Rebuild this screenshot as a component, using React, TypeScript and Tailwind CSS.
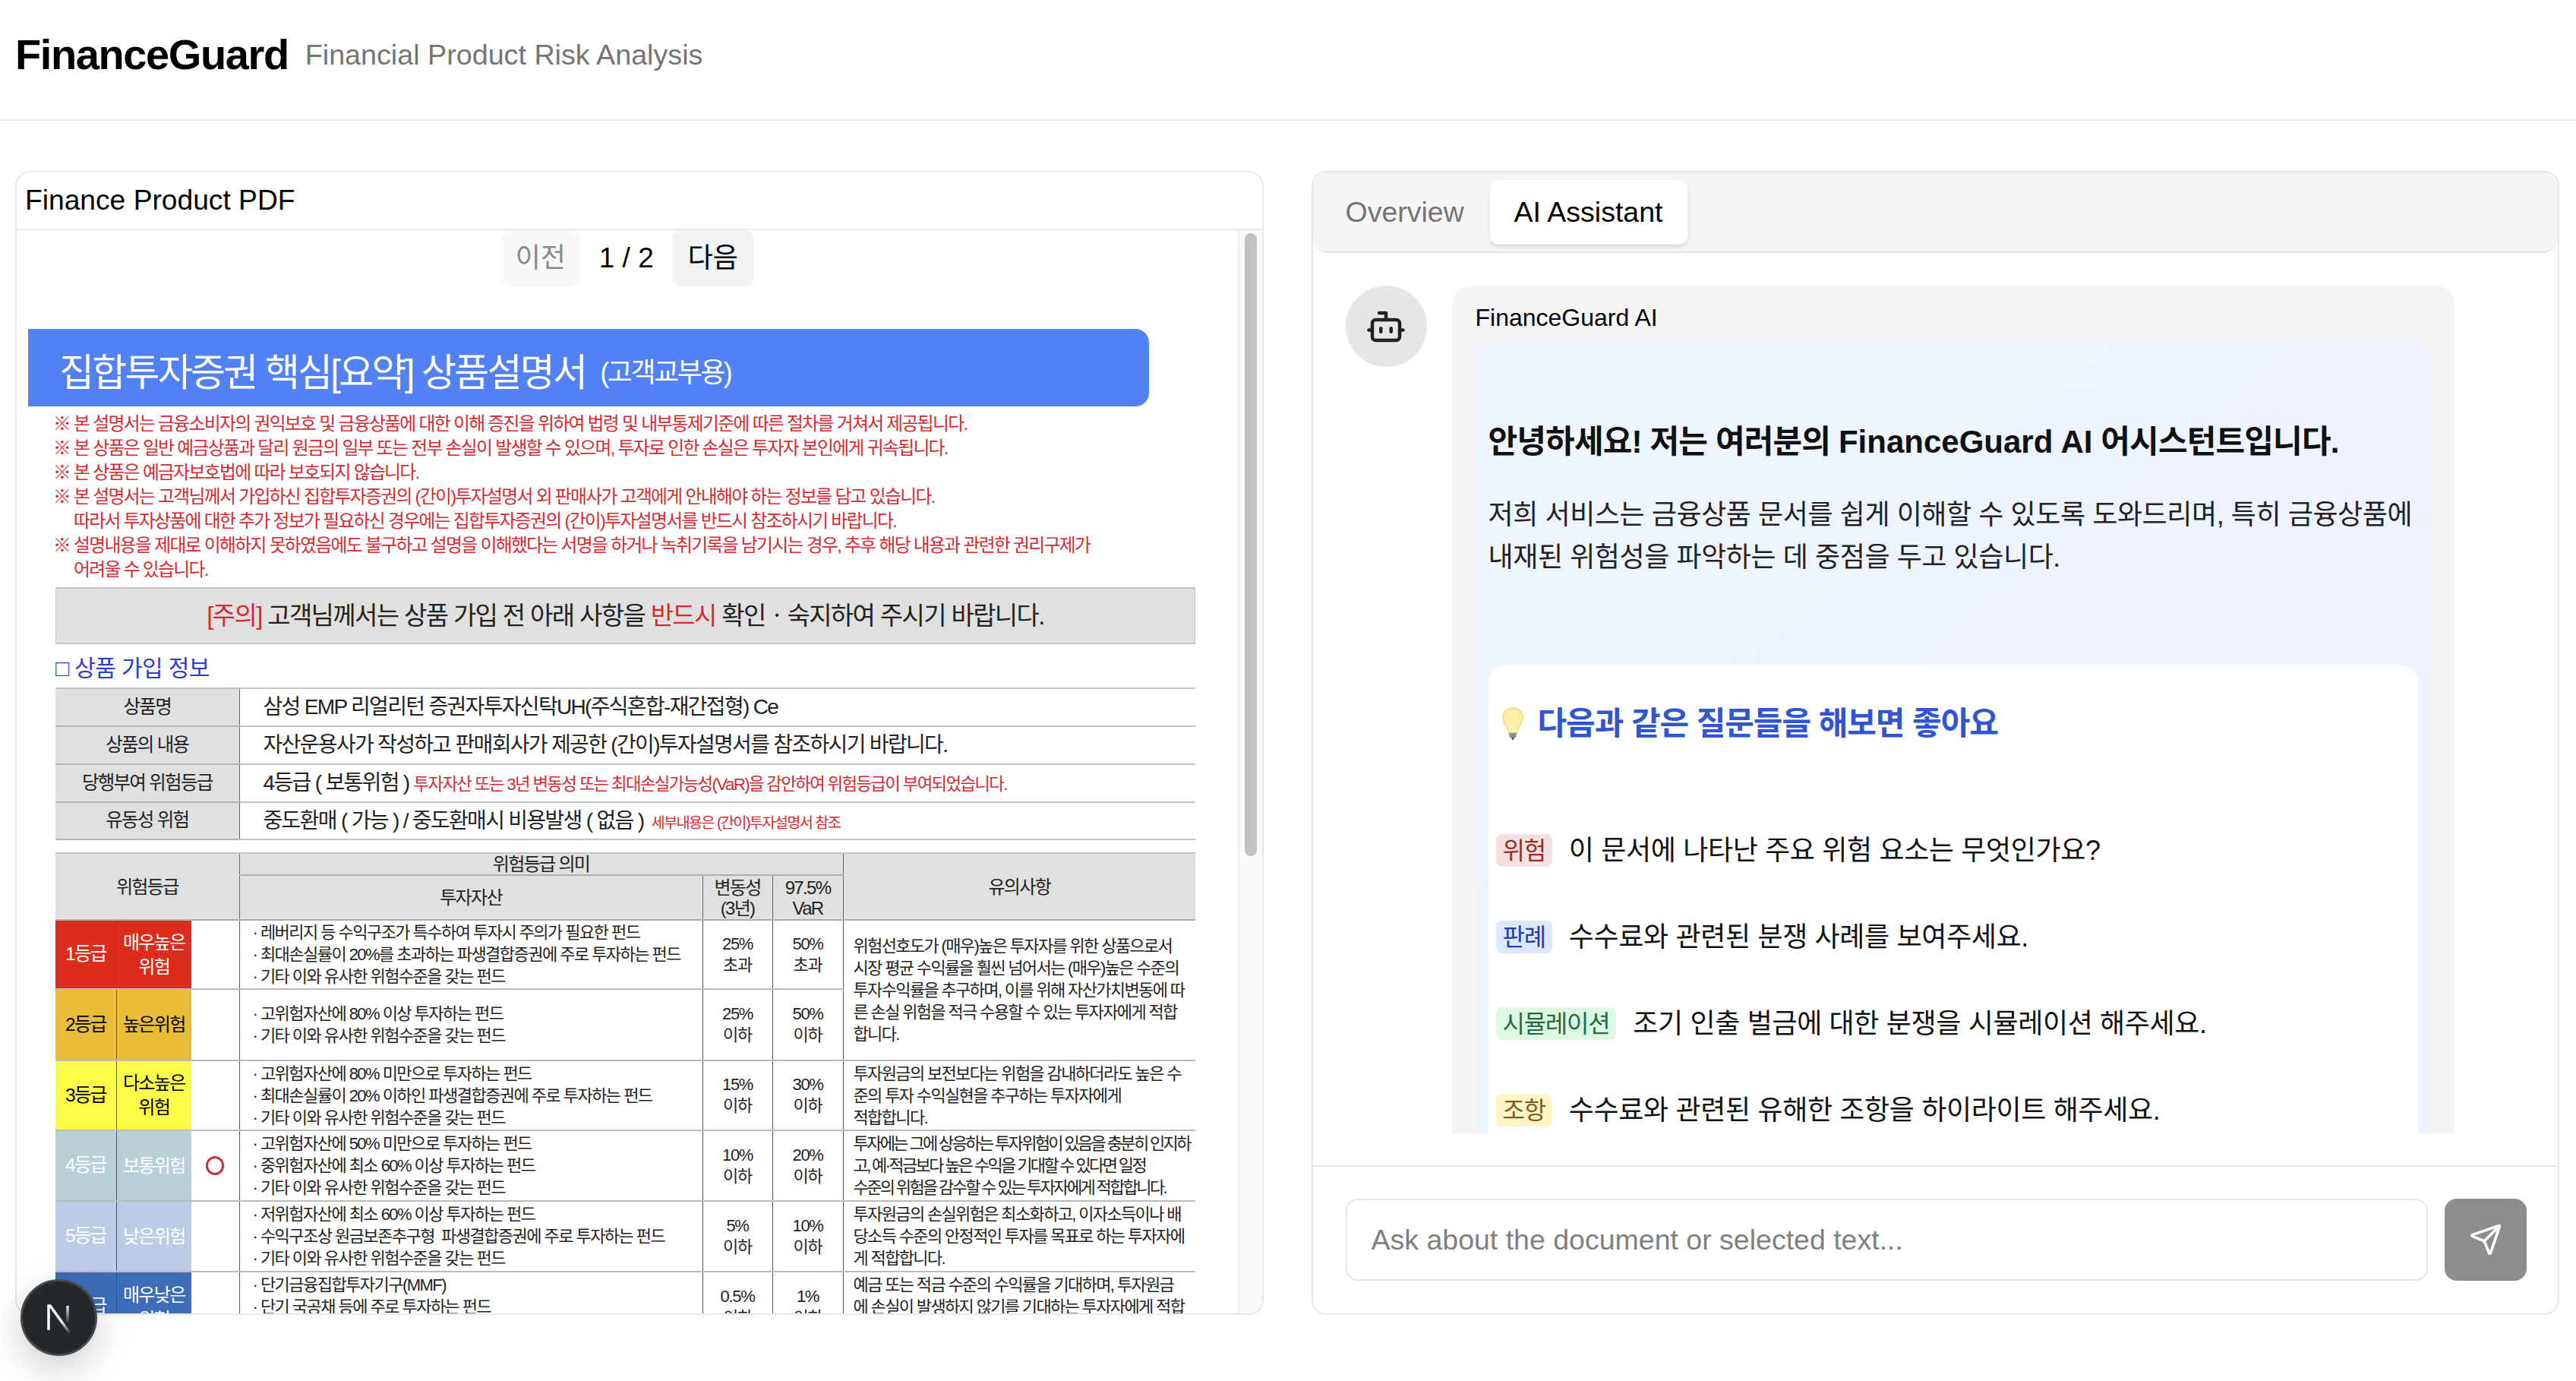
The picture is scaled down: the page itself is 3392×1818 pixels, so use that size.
import { Bot, Send } from 'lucide-react';

// 요약 설명서 상단 안내 문구
const NOTES = [
  { mark: true, text: '본 설명서는 금융소비자의 권익보호 및 금융상품에 대한 이해 증진을 위하여 법령 및 내부통제기준에 따른 절차를 거쳐서 제공됩니다.' },
  { mark: true, text: '본 상품은 일반 예금상품과 달리 원금의 일부 또는 전부 손실이 발생할 수 있으며, 투자로 인한 손실은 투자자 본인에게 귀속됩니다.' },
  { mark: true, text: '본 상품은 예금자보호법에 따라 보호되지 않습니다.' },
  { mark: true, text: '본 설명서는 고객님께서 가입하신 집합투자증권의 (간이)투자설명서 외 판매사가 고객에게 안내해야 하는 정보를 담고 있습니다.' },
  { mark: false, text: '따라서 투자상품에 대한 추가 정보가 필요하신 경우에는 집합투자증권의 (간이)투자설명서를 반드시 참조하시기 바랍니다.' },
  { mark: true, text: '설명내용을 제대로 이해하지 못하였음에도 불구하고 설명을 이해했다는 서명을 하거나 녹취기록을 남기시는 경우, 추후 해당 내용과 관련한 권리구제가' },
  { mark: false, text: '어려울 수 있습니다.' },
];

const ETC = '기타 이와 유사한 위험수준을 갖는 펀드';

const RISK_ROWS = [
  {
    grade: '1등급', name: ['매우높은', '위험'], gradeClass: 'bg-[#dc2d1c] text-white', height: 'h-[91px]',
    funds: ['레버리지 등 수익구조가 특수하여 투자시 주의가 필요한 펀드', '최대손실률이 20%를 초과하는 파생결합증권에 주로 투자하는 펀드', ETC],
    vol: ['25%', '초과'], cvar: ['50%', '초과'],
    note: ['위험선호도가 (매우)높은 투자자를 위한 상품으로서', '시장 평균 수익률을 훨씬 넘어서는 (매우)높은 수준의', '투자수익률을 추구하며, 이를 위해 자산가치변동에 따', '른 손실 위험을 적극 수용할 수 있는 투자자에게 적합', '합니다.'],
    noteClass: 'tracking-[-0.075em]', span: 2,
  },
  {
    grade: '2등급', name: ['높은위험'], gradeClass: 'bg-[#e9bc3a] text-black', height: 'h-[94px]',
    funds: ['고위험자산에 80% 이상 투자하는 펀드', ETC],
    vol: ['25%', '이하'], cvar: ['50%', '이하'], note: null, noteClass: '', span: 0,
  },
  {
    grade: '3등급', name: ['다소높은', '위험'], gradeClass: 'bg-[#fbfb48] text-black', height: 'h-[92px]',
    funds: ['고위험자산에 80% 미만으로 투자하는 펀드', '최대손실률이 20% 이하인 파생결합증권에 주로 투자하는 펀드', ETC],
    vol: ['15%', '이하'], cvar: ['30%', '이하'],
    note: ['투자원금의 보전보다는 위험을 감내하더라도 높은 수', '준의 투자 수익실현을 추구하는 투자자에게', '적합합니다.'],
    noteClass: 'tracking-[-0.075em]', span: 1,
  },
  {
    grade: '4등급', name: ['보통위험'], gradeClass: 'bg-[#b8d0d6] text-white', height: 'h-[93px]', current: true,
    funds: ['고위험자산에 50% 미만으로 투자하는 펀드', '중위험자산에 최소 60% 이상 투자하는 펀드', ETC],
    vol: ['10%', '이하'], cvar: ['20%', '이하'],
    note: ['투자에는 그에 상응하는 투자위험이 있음을 충분히 인지하', '고, 예·적금보다 높은 수익을 기대할 수 있다면 일정', '수준의 위험을 감수할 수 있는 투자자에게 적합합니다.'],
    noteClass: 'tracking-[-0.12em]', span: 1,
  },
  {
    grade: '5등급', name: ['낮은위험'], gradeClass: 'bg-[#bccbe6] text-white', height: 'h-[93px]',
    funds: ['저위험자산에 최소 60% 이상 투자하는 펀드', '수익구조상 원금보존추구형  파생결합증권에 주로 투자하는 펀드', ETC],
    vol: ['5%', '이하'], cvar: ['10%', '이하'],
    note: ['투자원금의 손실위험은 최소화하고, 이자소득이나 배', '당소득 수준의 안정적인 투자를 목표로 하는 투자자에', '게 적합합니다.'],
    noteClass: 'tracking-[-0.075em]', span: 1,
  },
  {
    grade: '6등급', name: ['매우낮은', '위험'], gradeClass: 'bg-[#3d6cb9] text-white', height: 'h-[93px]',
    funds: ['단기금융집합투자기구(MMF)', '단기 국공채 등에 주로 투자하는 펀드', ETC],
    vol: ['0.5%', '이하'], cvar: ['1%', '이하'],
    note: ['예금 또는 적금 수준의 수익률을 기대하며, 투자원금', '에 손실이 발생하지 않기를 기대하는 투자자에게 적합', '합니다.'],
    noteClass: 'tracking-[-0.075em]', span: 1,
  },
];

const QUESTIONS = [
  { tag: '위험', tagClass: 'bg-[#f6dfdf] text-[#9b2c2c]', text: '이 문서에 나타난 주요 위험 요소는 무엇인가요?' },
  { tag: '판례', tagClass: 'bg-[#dbe8fd] text-[#1e40af]', text: '수수료와 관련된 분쟁 사례를 보여주세요.' },
  { tag: '시뮬레이션', tagClass: 'bg-[#dcf7e4] text-[#256b3e]', text: '조기 인출 벌금에 대한 분쟁을 시뮬레이션 해주세요.' },
  { tag: '조항', tagClass: 'bg-[#fdf5c8] text-[#855a12]', text: '수수료와 관련된 유해한 조항을 하이라이트 해주세요.' },
];

function ProductInfoTable() {
  const labelCell = 'bg-[#e0e0e0] text-center text-[24.5px] tracking-[-0.07em] text-[#222] border-b-2 border-[#b5b5b5] border-r border-r-[#666]';
  const valueCell = 'pl-[31px] text-[28px] tracking-[-0.06em] text-[#222] border-b-2 border-[#c4c4c4] whitespace-nowrap';
  return (
    <table className="mt-[6px] ml-[36px] w-[1501px] table-fixed border-t-2 border-[#c4c4c4]">
      <colgroup>
        <col className="w-[242px]" />
        <col />
      </colgroup>
      <tbody>
        <tr className="h-[50px]">
          <td className={labelCell}>상품명</td>
          <td className={valueCell}>삼성 EMP 리얼리턴 증권자투자신탁UH(주식혼합-재간접형) Ce</td>
        </tr>
        <tr className="h-[50px]">
          <td className={labelCell}>상품의 내용</td>
          <td className={valueCell}>자산운용사가 작성하고 판매회사가 제공한 (간이)투자설명서를 참조하시기 바랍니다.</td>
        </tr>
        <tr className="h-[50px]">
          <td className={labelCell}>당행부여 위험등급</td>
          <td className={valueCell}>
            4등급 ( 보통위험 ) <span className="text-[22.4px] text-[#d9282f]">투자자산 또는 3년 변동성 또는 최대손실가능성(VaR)을 감안하여 위험등급이 부여되었습니다.</span>
          </td>
        </tr>
        <tr className="h-[49px]">
          <td className={labelCell}>유동성 위험</td>
          <td className={valueCell}>
            중도환매 ( 가능 ) / 중도환매시 비용발생 ( 없음 ) <span className="ml-1 text-[19.8px] text-[#d9282f]">세부내용은 (간이)투자설명서 참조</span>
          </td>
        </tr>
      </tbody>
    </table>
  );
}

function RiskTable() {
  const head = 'bg-[#e0e0e0] text-center text-[24px] leading-[27px] tracking-[-0.07em] text-[#222] border-b-2 border-[#b0b0b0] border-r border-r-[#666]';
  const rowLine = 'border-b-2 border-[#bcbcbc]';
  const vLine = 'border-r border-r-[#555]';
  return (
    <table className="mt-[16px] ml-[36px] w-[1501px] table-fixed border-t-2 border-[#c4c4c4]">
      <colgroup>
        <col className="w-[80px]" />
        <col className="w-[99px]" />
        <col className="w-[63px]" />
        <col className="w-[610px]" />
        <col className="w-[92px]" />
        <col className="w-[93px]" />
        <col />
      </colgroup>
      <thead>
        <tr className="h-[29px]">
          <th colSpan={3} rowSpan={2} className={`${head} font-normal`}>위험등급</th>
          <th colSpan={3} className={`${head} font-normal`}>위험등급 의미</th>
          <th rowSpan={2} className={`${head} font-normal border-r-0`}>유의사항</th>
        </tr>
        <tr className="h-[59px]">
          <th className={`${head} font-normal`}>투자자산</th>
          <th className={`${head} font-normal`}>변동성<br />(3년)</th>
          <th className={`${head} font-normal`}>97.5%<br />VaR</th>
        </tr>
      </thead>
      <tbody>
        {RISK_ROWS.map((row) => (
          <tr key={row.grade} className={row.height}>
            <td className={`${row.gradeClass} ${rowLine} border-r border-r-[#555] text-center text-[24.5px] tracking-[-0.07em]`}>{row.grade}</td>
            <td className={`${row.gradeClass} ${rowLine} text-center text-[24px] leading-[32px] tracking-[-0.07em]`}>
              {row.name.map((n) => <div key={n}>{n}</div>)}
            </td>
            <td className={`${rowLine} ${vLine} text-center`}>
              {row.current && <div className="mx-auto h-[25px] w-[24px] rounded-full border-[3px] border-[#c8323a]" />}
            </td>
            <td className={`${rowLine} ${vLine} pl-[17px] text-[22px] leading-[29px] tracking-[-0.07em] text-[#222] whitespace-pre`}>
              {row.funds.map((f) => <div key={f}>· {f}</div>)}
            </td>
            <td className={`${rowLine} ${vLine} text-center text-[22px] leading-[28px] tracking-[-0.06em] text-[#222]`}>
              {row.vol.map((v) => <div key={v}>{v}</div>)}
            </td>
            <td className={`${rowLine} ${vLine} text-center text-[22px] leading-[28px] tracking-[-0.06em] text-[#222]`}>
              {row.cvar.map((v) => <div key={v}>{v}</div>)}
            </td>
            {row.note && (
              <td rowSpan={row.span} className={`${rowLine} ${row.noteClass} pl-[13px] text-[22px] leading-[29px] text-[#222] whitespace-nowrap`}>
                {row.note.map((n) => <div key={n}>{n}</div>)}
              </td>
            )}
          </tr>
        ))}
      </tbody>
    </table>
  );
}

function PdfPage() {
  return (
    <div className="mt-[56px] ml-[15px] w-[1600px]">
      <div className="flex h-[102px] w-[1476px] items-center rounded-r-[18px] bg-[#5181f5] pl-[41px] pt-[14px] text-white">
        <span className="text-[50px] tracking-[-0.055em]">집합투자증권 핵심[요약] 상품설명서</span>
        <span className="ml-[19px] text-[36px] tracking-[-0.07em]">(고객교부용)</span>
      </div>
      <div className="mt-[7px] ml-[33px] text-[23.8px] leading-[32px] tracking-[-0.07em] text-[#d9282f] whitespace-nowrap">
        {NOTES.map((note) => (
          <div key={note.text} className={note.mark ? '' : 'pl-[27px]'}>
            {note.mark ? '※ ' : ''}{note.text}
          </div>
        ))}
      </div>
      <div className="mt-[7px] ml-[36px] flex h-[75px] w-[1501px] items-center justify-center border-y-2 border-x border-[#c4c4c4] bg-[#e0e0e0] text-[33px] tracking-[-0.05em] text-[#222]">
        <span><span className="text-[#d9282f]">[주의]</span> 고객님께서는 상품 가입 전 아래 사항을 <span className="text-[#d9282f]">반드시</span> 확인ㆍ숙지하여 주시기 바랍니다.</span>
      </div>
      <div className="mt-[11px] ml-[36px] flex h-[40px] items-center text-[30px] tracking-[-0.02em] text-[#2a3bd6]">
        □ 상품 가입 정보
      </div>
      <ProductInfoTable />
      <RiskTable />
    </div>
  );
}

function PdfPanel() {
  return (
    <section className="flex h-full min-h-0 flex-col overflow-hidden rounded-[20px] border-2 border-[#e8e8e8] bg-white">
      <div className="flex h-[76px] shrink-0 items-center border-b-2 border-[#e8e8e8] pl-[11px] text-[37.2px] text-black">
        Finance Product PDF
      </div>
      <div className="flex min-h-0 flex-1">
        <div className="min-h-0 flex-1 overflow-hidden">
          <div className="flex items-center justify-center gap-[24px]">
            <button className="h-[74px] w-[106px] rounded-[12px] bg-[#f8f8f9] text-[36px] text-[#8a8a8a]">이전</button>
            <span className="text-[37px] text-black">1 / 2</span>
            <button className="h-[74px] w-[108px] rounded-[12px] bg-[#f2f3f5] text-[36px] text-black">다음</button>
          </div>
          <PdfPage />
        </div>
        <div className="w-[32px] shrink-0 border-l-2 border-[#ececec] bg-[#fafafa] px-[7px] pt-[4px]">
          <div className="h-[820px] rounded-full bg-[#c2c2c2]" />
        </div>
      </div>
    </section>
  );
}

function BulbIcon() {
  return (
    <svg width="30" height="44" viewBox="0 0 30 44" className="shrink-0">
      <path d="M15 1C7 1 2 7 2 14c0 7 6 10 8 20h10c2-10 8-13 8-20C28 7 23 1 15 1z" fill="#fdf0a8" stroke="#f3d97a" strokeWidth="1.5" />
      <path d="M10 34h10l-1 6h-8z" fill="#8b8b8b" />
      <path d="M13 40h4l-1 3h-2z" fill="#555" />
    </svg>
  );
}

function ChatPanel() {
  return (
    <section className="flex h-full min-h-0 flex-col overflow-hidden rounded-[20px] border-2 border-[#e8e8e8] bg-white">
      <div className="flex h-[106px] shrink-0 items-center gap-[2px] rounded-[20px] border-b-2 border-[#e8e8e8] bg-[#f5f5f5] pl-[43px]">
        <span className="w-[188px] text-[37.5px] text-[#747474]">Overview</span>
        <span className="flex h-[85px] w-[260px] items-center justify-center rounded-[12px] bg-white text-[37.5px] text-black shadow-md">AI Assistant</span>
      </div>
      <div className="flex min-h-0 flex-1 gap-[33px] overflow-hidden pt-[43px] pl-[43px] pb-[42px]">
        <div className="flex size-[107px] shrink-0 items-center justify-center rounded-full bg-[#e6e6e6] text-[#222]">
          <Bot size={54} strokeWidth={2} />
        </div>
        <div className="w-[1320px] overflow-hidden rounded-t-[24px] bg-[#f5f5f5] px-[31px] pt-[18px]">
          <div className="text-[32px] leading-[48px] text-black">FinanceGuard AI</div>
          <div className="mt-[8px] rounded-t-[24px] bg-gradient-to-br from-[#eff6ff] to-[#eef2ff] px-[17px] pt-[96px]">
            <p className="text-[42px] font-semibold leading-[72px] tracking-[-0.02em] text-[#111]">
              안녕하세요! 저는 여러분의 <b className="tracking-normal">FinanceGuard AI</b> 어시스턴트입니다.
            </p>
            <p className="mt-[32px] text-[36px] leading-[56px] tracking-[-0.012em] text-[#222]">
              저희 서비스는 금융상품 문서를 쉽게 이해할 수 있도록 도와드리며, 특히 금융상품에<br />
              내재된 위험성을 파악하는 데 중점을 두고 있습니다.
            </p>
            <div className="mt-[113px] rounded-t-[24px] bg-white px-[10px] pt-[56px]">
              <div className="flex items-center gap-[18px] pl-[7px]">
                <BulbIcon />
                <span className="text-[42px] font-bold leading-[44px] tracking-[-0.025em] text-[#2f55d4]">다음과 같은 질문들을 해보면 좋아요</span>
              </div>
              <div className="mt-[123px] flex flex-col gap-[71px] pb-[40px]">
                {QUESTIONS.map((q) => (
                  <div key={q.tag} className="flex h-[43px] items-center gap-[22px] whitespace-nowrap">
                    <span className={`${q.tagClass} flex h-[43px] items-center rounded-[8px] px-[9px] text-[32px] tracking-[-0.04em]`}>{q.tag}</span>
                    <span className="text-[36px] tracking-[-0.01em] text-[#111]">{q.text}</span>
                  </div>
                ))}
              </div>
            </div>
          </div>
        </div>
      </div>
      <div className="flex shrink-0 gap-[22px] border-t-2 border-[#e8e8e8] pl-[43px] pr-[41px] pt-[42px] pb-[43px]">
        <input
          className="h-[108px] min-w-0 flex-1 rounded-[16px] border-2 border-[#e5e5e5] bg-white pl-[32px] text-[37.5px] outline-none placeholder:text-[#808080]"
          placeholder="Ask about the document or selected text..."
        />
        <button className="flex h-[108px] w-[108px] shrink-0 items-center justify-center rounded-[16px] bg-[#8d8d8d] text-white">
          <Send size={44} strokeWidth={2} />
        </button>
      </div>
    </section>
  );
}

export default function App() {
  return (
    <div className="relative flex h-[1818px] w-[3392px] flex-col overflow-hidden bg-white [font-family:'Liberation_Sans','Noto_Sans_CJK_KR',sans-serif]">
      <header className="flex h-[159px] shrink-0 items-center gap-[22px] border-b-2 border-[#e8e8e8] pb-[14px] pl-[20px]">
        <span className="text-[56px] font-bold tracking-[-0.025em] text-black">FinanceGuard</span>
        <span className="mt-[1px] text-[37.7px] text-[#757575]">Financial Product Risk Analysis</span>
      </header>
      <main className="mt-[66px] grid h-[1506px] grid-cols-2 gap-[63px] pl-[20px] pr-[22px]">
        <PdfPanel />
        <ChatPanel />
      </main>
      {/* Next.js dev indicator */}
      <div className="absolute left-[27px] top-[1684px] flex size-[101px] items-center justify-center rounded-full border-[3px] border-[#44484b] bg-[#24282b] shadow-[0_16px_48px_rgba(0,0,0,0.2)]">
        <svg width="44" height="44" viewBox="0 0 44 44" fill="none">
          <defs>
            <linearGradient id="nFade" x1="8" y1="6" x2="38" y2="42" gradientUnits="userSpaceOnUse">
              <stop offset="0.55" stopColor="#fff" />
              <stop offset="1" stopColor="#fff" stopOpacity="0" />
            </linearGradient>
            <linearGradient id="nFadeRight" x1="33" y1="4" x2="33" y2="30" gradientUnits="userSpaceOnUse">
              <stop offset="0" stopColor="#fff" />
              <stop offset="1" stopColor="#fff" stopOpacity="0" />
            </linearGradient>
          </defs>
          <path d="M8 38V6h2l26 36" stroke="url(#nFade)" strokeWidth="3.5" />
          <path d="M33 6v24" stroke="url(#nFadeRight)" strokeWidth="3.5" />
        </svg>
      </div>
    </div>
  );
}
